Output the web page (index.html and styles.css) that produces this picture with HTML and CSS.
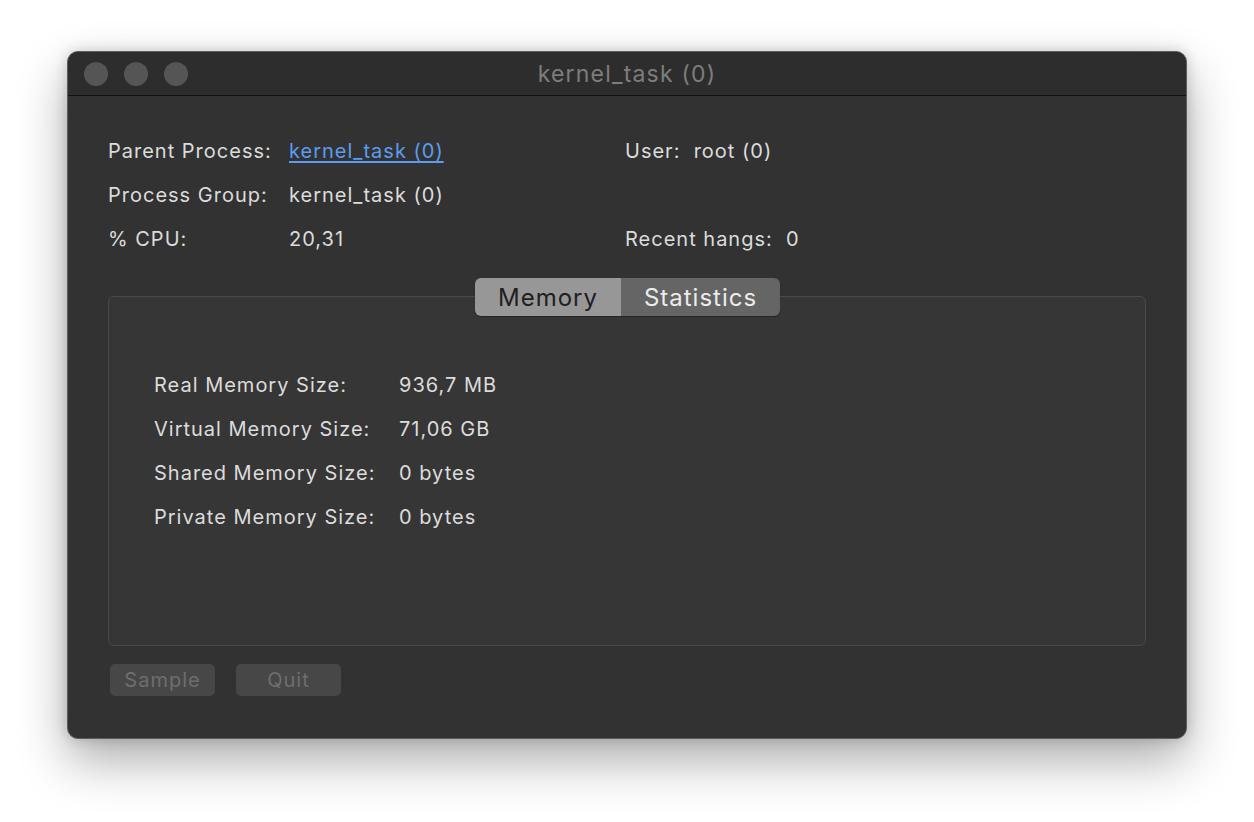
FILE: index.html
```html
<!DOCTYPE html>
<html>
<head>
<meta charset="utf-8">
<link rel="stylesheet" href="styles.css">
</head>
<body>
<div class="stage">
  <div class="window">
    <div class="titlebar">
      <div class="lights">
        <span class="light"></span><span class="light"></span><span class="light"></span>
      </div>
      <div class="title">kernel_task (0)</div>
    </div>
    <div class="content">
      <div class="info">
        <div class="row">
          <span class="lbl">Parent Process:</span>
          <a class="val link" href="#">kernel_task (0)</a>
          <span class="right">User:&nbsp;&nbsp;root (0)</span>
        </div>
        <div class="row">
          <span class="lbl">Process Group:</span>
          <span class="val">kernel_task (0)</span>
          <span class="right"></span>
        </div>
        <div class="row">
          <span class="lbl">% CPU:</span>
          <span class="val">20,31</span>
          <span class="right">Recent hangs:&nbsp;&nbsp;0</span>
        </div>
      </div>
      <div class="tabs">
        <div class="segmented">
          <span class="seg active">Memory</span>
          <span class="seg">Statistics</span>
        </div>
        <div class="panel">
          <div class="mrow"><span class="mlbl">Real Memory Size:</span><span>936,7 MB</span></div>
          <div class="mrow"><span class="mlbl">Virtual Memory Size:</span><span>71,06 GB</span></div>
          <div class="mrow"><span class="mlbl">Shared Memory Size:</span><span>0 bytes</span></div>
          <div class="mrow"><span class="mlbl">Private Memory Size:</span><span>0 bytes</span></div>
        </div>
      </div>
      <div class="buttons">
        <button class="btn">Sample</button>
        <button class="btn">Quit</button>
      </div>
    </div>
  </div>
</div>
</body>
</html>
```
FILE: styles.css
```css
html, body {
  margin: 0;
  padding: 0;
  background: #ffffff;
}
body {
  width: 1254px;
  height: 822px;
  overflow: hidden;
  font-family: Inter, "Noto Sans", sans-serif;
}
.stage {
  padding: 51px 0 0 67px;
}
.window {
  width: 1118px;
  height: 686px;
  border: 1px solid #5e5e5e;
  border-radius: 11px;
  background: #323232;
  box-shadow: 0 22px 50px rgba(0,0,0,0.32), 0 0 14px rgba(0,0,0,0.18);
  overflow: hidden;
  display: flex;
  flex-direction: column;
}
.titlebar {
  height: 43px;
  background: #2d2d2d;
  border-bottom: 1px solid #111111;
  display: flex;
  align-items: center;
  position: relative;
}
.lights {
  display: flex;
  gap: 16px;
  padding-left: 16px;
}
.light {
  width: 24px;
  height: 24px;
  border-radius: 50%;
  background: #555555;
}
.title {
  position: absolute;
  left: 0;
  right: 0;
  top: 0;
  bottom: 0;
  display: flex;
  align-items: center;
  justify-content: center;
  color: #7d7d7d;
  font-size: 23px;
  letter-spacing: 1.2px;
  pointer-events: none;
}
.content {
  padding: 33px 40px 0 40px;
  color: #dcdcdc;
  font-size: 20px;
  letter-spacing: 1px;
}
.info .row {
  display: flex;
  height: 44px;
  align-items: center;
}
.lbl {
  width: 181px;
}
.val {
  width: 336px;
  color: #dcdcdc;
}
.link {
  color: #5b9cf0;
  text-decoration: underline;
  text-underline-offset: 3px;
}
.tabs {
  margin-top: 17px;
  display: flex;
  flex-direction: column;
  align-items: center;
}
.segmented {
  display: flex;
  height: 38px;
  border-radius: 6px;
  overflow: hidden;
  position: relative;
  z-index: 1;
  box-shadow: 0 1px 1px rgba(0,0,0,0.35);
  margin-left: 1px;
}
.seg {
  display: flex;
  align-items: center;
  justify-content: center;
  font-size: 24px;
  letter-spacing: 1px;
  background: #656565;
  color: #ececec;
  width: 159px;
}
.seg.active {
  background: #979797;
  color: #202020;
  width: 146px;
}
.panel {
  box-sizing: border-box;
  align-self: stretch;
  margin-top: -20px;
  height: 350px;
  border: 1px solid #4a4a4a;
  border-radius: 6px;
  background: #363636;
  padding: 66px 0 0 45px;
}
.mrow {
  display: flex;
  height: 44px;
  align-items: center;
}
.mlbl {
  width: 245px;
}
.buttons {
  display: flex;
  gap: 21px;
  margin-top: 18px;
  padding-left: 2px;
}
.btn {
  width: 105px;
  height: 32px;
  border: none;
  border-radius: 5px;
  background: #474747;
  color: #6e6e6e;
  font-family: Inter, "Noto Sans", sans-serif;
  font-size: 20px;
  letter-spacing: 1px;
  padding: 0;
}
```
